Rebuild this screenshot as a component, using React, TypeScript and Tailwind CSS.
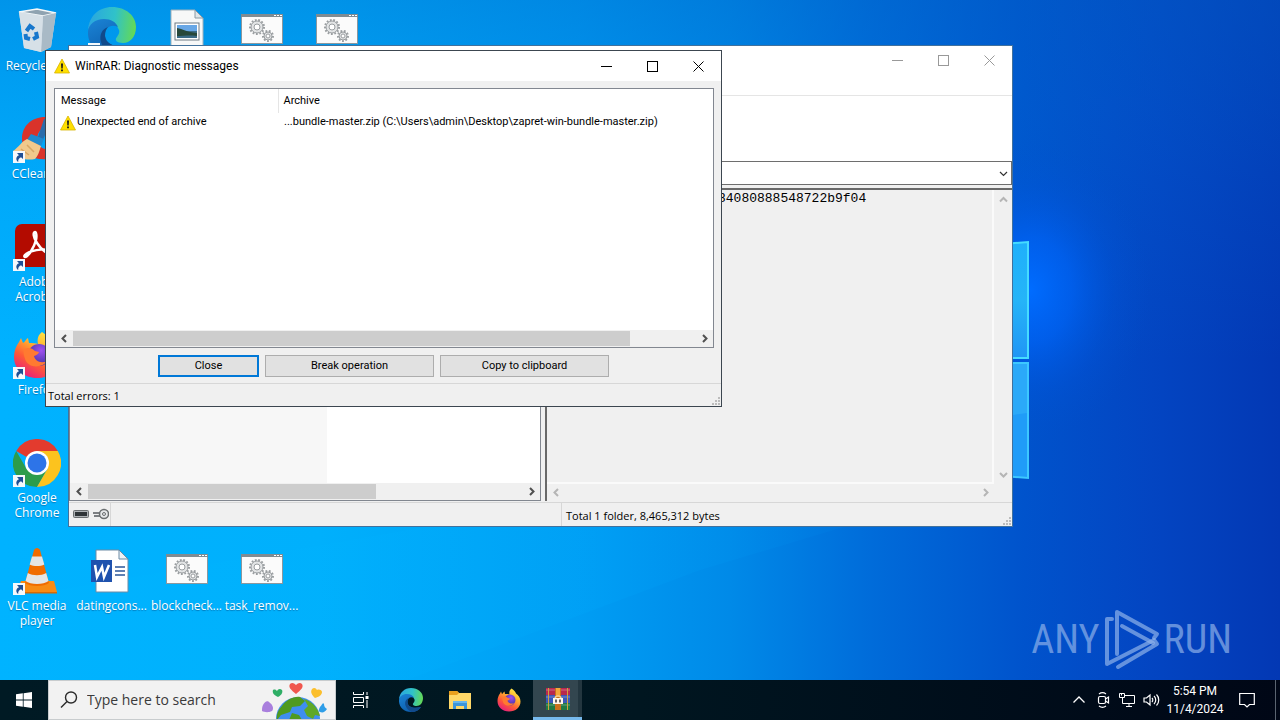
import { useState } from "react";
import type { ReactNode } from "react";
import clsx from "clsx";

type IconProps = { className?: string };

/* ---------- Wallpaper ---------- */

function Wallpaper() {
  return (
    <svg
      className="absolute inset-0 w-full h-full"
      viewBox="0 0 1280 720"
      preserveAspectRatio="none"
      aria-hidden="true"
    >
      <defs>
        <linearGradient id="wp-base" x1="0" y1="0" x2="1" y2="0">
          <stop offset="0" stopColor="#00b2ff" />
          <stop offset="0.25" stopColor="#00b0fc" />
          <stop offset="0.45" stopColor="#009ef4" />
          <stop offset="0.57" stopColor="#008ae8" />
          <stop offset="0.68" stopColor="#006cda" />
          <stop offset="0.8" stopColor="#0053cc" />
          <stop offset="0.9" stopColor="#0345c2" />
          <stop offset="1" stopColor="#0338b4" />
        </linearGradient>
        <linearGradient id="wp-top" x1="0" y1="0" x2="0" y2="1">
          <stop offset="0" stopColor="#0064c8" stopOpacity="0.38" />
          <stop offset="0.25" stopColor="#0070d8" stopOpacity="0.14" />
          <stop offset="0.5" stopColor="#0070d8" stopOpacity="0" />
        </linearGradient>
        <radialGradient id="wp-glow">
          <stop offset="0" stopColor="#006cff" />
          <stop offset="0.35" stopColor="#0062f4" stopOpacity="0.75" />
          <stop offset="0.7" stopColor="#0056e0" stopOpacity="0.25" />
          <stop offset="1" stopColor="#0050d0" stopOpacity="0" />
        </radialGradient>
        <linearGradient id="wp-beam" x1="0" y1="0" x2="1" y2="0">
          <stop offset="0" stopColor="#00b8ff" stopOpacity="0.2" />
          <stop offset="0.6" stopColor="#00b0ff" stopOpacity="0.14" />
          <stop offset="1" stopColor="#00a0ff" stopOpacity="0" />
        </linearGradient>
        <linearGradient id="wp-pane" x1="0" y1="0" x2="0" y2="1">
          <stop offset="0" stopColor="#1fb0fb" />
          <stop offset="0.5" stopColor="#25b4f8" />
          <stop offset="1" stopColor="#2095f5" />
        </linearGradient>
      </defs>
      <rect width="1280" height="720" fill="url(#wp-base)" />
      <rect width="1280" height="720" fill="url(#wp-top)" />
      <path d="M0 720V600L700 480 1000 480 700 570 300 720Z" fill="url(#wp-beam)" />
      <ellipse cx="1030" cy="290" rx="120" ry="150" fill="url(#wp-glow)" />
      <path d="M860 255 L1028 242 V358 H860Z" fill="url(#wp-pane)" stroke="#45dcff" strokeWidth="2" />
      <path d="M860 363 H1028 V478 L860 464Z" fill="#209cf8" stroke="#3cc8ff" strokeWidth="2" />
      <path d="M1013 415 L1027 413 V364 H1013Z" fill="#2ba9f9" />
    </svg>
  );
}

/* ---------- Desktop icons ---------- */

function ShortcutArrow() {
  return (
    <svg className="absolute left-0 bottom-0 w-3 h-3" viewBox="0 0 12 12" aria-hidden="true">
      <rect width="12" height="12" fill="#f5f8fb" />
      <path d="M4 2h6v6L8 6.200C6 7 5 8.500 5.200 11 2.500 9 2.700 5.500 6 4.200Z" fill="#1f4f94" />
    </svg>
  );
}

function RecycleBinIcon({ className }: IconProps) {
  return (
    <svg className={className} viewBox="0 0 48 48" aria-hidden="true">
      <path d="M6 5 L24 2 L43 6 L38 40 L28 45 L11 41Z" fill="#cfdbe4" />
      <path d="M6 5 L24 2 L43 6 L30 9Z" fill="#8fa3b1" />
      <path d="M6 5 L24 2 L43 6 L30 9Z" fill="none" stroke="#f4f8fa" strokeWidth="1.500" />
      <path d="M30 9 L43 6 L38 40 L28 45Z" fill="#a9bac6" />
      <path d="M6 5 L30 9 L28 45 L11 41Z" fill="#d6e0e7" />
      <g fill="none" stroke="#1777cc" strokeWidth="4">
        <path d="M13.500 24l3.500-5 4 3" />
        <path d="M23 25l1 5-4 2" />
        <path d="M17 32l-4-1-.5-4" />
      </g>
    </svg>
  );
}

function EdgeIcon({ className }: IconProps) {
  return (
    <svg className={className} viewBox="0 0 48 48" aria-hidden="true">
      <defs>
        <linearGradient id="edge-a" x1="0" y1="0.3" x2="1" y2="0.4">
          <stop offset="0" stopColor="#2aa5e0" />
          <stop offset="0.55" stopColor="#30c2c9" />
          <stop offset="1" stopColor="#63d957" />
        </linearGradient>
        <linearGradient id="edge-b" x1="0" y1="0" x2="0.6" y2="1">
          <stop offset="0" stopColor="#1b84d6" />
          <stop offset="1" stopColor="#0c5cab" />
        </linearGradient>
      </defs>
      <path
        d="M0 23C1 9 11 0 24 0c14 0 24 9 24 20 0 10-6 16-13 16-6 0-9-3-6-6 1-2 3-4 2-7-2-6-8-9-15-9C8 14 2 18 0 23Z"
        fill="url(#edge-a)"
      />
      <path
        d="M0 24c1-7 7-12 16-12 7 0 12 3 14 8-8-4-14 2-13 9 1 9 12 13 27 9-4 6-11 10-20 10C9 48-1 37 0 24Z"
        fill="url(#edge-b)"
      />
      <path d="M20 20c-6 2-9 8-7 15 2 6 6 10 12 13 8 0 16-4 19-10-14 4-26 0-27-9 0-4 1-7 3-9Z" fill="#114a8b" />
    </svg>
  );
}

function ImageFileIcon({ className }: IconProps) {
  return (
    <svg className={className} viewBox="0 0 48 48" aria-hidden="true">
      <path d="M8 3h24l8 8v34H8Z" fill="#f7f8f8" stroke="#9fb0ba" />
      <path d="M32 3v8h8Z" fill="#dfe5e8" stroke="#8a9aa4" />
      <rect x="12" y="16" width="24" height="17" fill="#fff" stroke="#6e7b84" />
      <rect x="14" y="18" width="20" height="6" fill="#68a7e6" />
      <path d="M14 24h20v7H14Z" fill="#3b6b86" />
      <path d="M14 21c6 1 9 4 20 5v3c-8-1-14 0-20 0Z" fill="#28483a" />
    </svg>
  );
}

function Gear({ cx, cy, r }: { cx: number; cy: number; r: number }) {
  return (
    <g fill="none" stroke="#9a9ea1">
      <circle cx={cx} cy={cy} r={r + 1} strokeWidth="2" strokeDasharray="1.800 1.600" />
      <circle cx={cx} cy={cy} r={r} fill="#e2e4e5" />
      <circle cx={cx} cy={cy} r={r / 2} fill="#fff" />
    </g>
  );
}

function BatchFileIcon({ className }: IconProps) {
  return (
    <svg className={className} viewBox="0 0 48 48" aria-hidden="true">
      <rect x="3.500" y="8.500" width="41" height="28" fill="#fbfbfb" stroke="#8b979e" />
      <rect x="3" y="7" width="42" height="3" fill="#7f8b92" />
      <path d="M36 8.500h2M39 8.500h2M42 8.500h2" stroke="#fff" />
      <Gear cx={19} cy={20} r={6} />
      <Gear cx={30} cy={29} r={4} />
    </svg>
  );
}

function CCleanerIcon({ className }: IconProps) {
  return (
    <svg className={className} viewBox="0 0 48 48" aria-hidden="true">
      <path d="M40 3C22-1 9 9 9 24s10 22 28 20l8-8-12-2c-10 0-13-18 0-22Z" fill="#d9332a" />
      <path d="M31 4l-6 18 5 3 8-20Z" fill="#2a6cab" />
      <path d="M18 19l13 5-3 7-14-6Z" fill="#1e8ad0" />
      <path d="M0 36c6-4 8-9 14-12l14 7c-2 6-3 10-6 13-6 1-14 2-22-8Z" fill="#f1c98c" />
      <path d="M8 34l8 6M14 30l7 7" stroke="#d8a765" strokeWidth="1.500" />
    </svg>
  );
}

function AcrobatIcon({ className }: IconProps) {
  return (
    <svg className={className} viewBox="0 0 48 48" aria-hidden="true">
      <rect x="2" y="1" width="44" height="43" rx="7" fill="#b30b00" />
      <path
        d="M12 34c3 0 9-9 11-17 1-5 0-8-1-8-2 0-2 5 2 11 5 8 12 12 13 9 1-4-17-3-24 2-2 1-2 3-1 3Z"
        fill="none"
        stroke="#fff"
        strokeWidth="2.500"
      />
    </svg>
  );
}

function FirefoxIcon({ className }: IconProps) {
  return (
    <svg className={className} viewBox="0 0 48 48" aria-hidden="true">
      <defs>
        <linearGradient id="fx-a" x1="0.8" y1="0" x2="0.2" y2="1">
          <stop offset="0" stopColor="#fff14a" />
          <stop offset="0.35" stopColor="#ffb02e" />
          <stop offset="0.65" stopColor="#ff5a36" />
          <stop offset="1" stopColor="#e31587" />
        </linearGradient>
        <radialGradient id="fx-b" cx="0.6" cy="0.3">
          <stop offset="0" stopColor="#a050f0" />
          <stop offset="1" stopColor="#5b3bb8" />
        </radialGradient>
      </defs>
      <path
        d="M29 1c5 3 8 7 9 10 5 3 9 9 9 16 0 12-10 20-23 20S1 38 1 26c0-6 2-11 5-15l2-4 2 5c2-1 3-4 5-5l1 5c3 0 7 0 9 1-1-5 0-9 4-12Z"
        fill="url(#fx-a)"
      />
      <circle cx="26" cy="24" r="11" fill="url(#fx-b)" />
      <path d="M11 18c5-2 8-1 11 2l4 1c-1 3-3 3-5 4 1 5 7 8 13 5-4 7-19 8-22-2-1-3-2-7-1-10Z" fill="#ff7a30" />
    </svg>
  );
}

function ChromeIcon({ className }: IconProps) {
  return (
    <svg className={className} viewBox="0 0 48 48" aria-hidden="true">
      <path d="M24 24 3.200 12A24 24 0 0 1 44.800 12Z" fill="#e33b2e" />
      <path d="M24 24 13.600 30 3.200 12A24 24 0 0 0 24 48L34.400 30Z" fill="#2c9c4b" />
      <path d="M24 12H44.800A24 24 0 0 1 24 48L34.400 30Z" fill="#fcc31e" />
      <circle cx="24" cy="24" r="12" fill="#fff" />
      <circle cx="24" cy="24" r="9.500" fill="#2d74e8" />
    </svg>
  );
}

function VlcIcon({ className }: IconProps) {
  return (
    <svg className={className} viewBox="0 0 48 48" aria-hidden="true">
      <path d="M8 34h33l3 11H4Z" fill="#f78b14" />
      <path d="M4 45h40v1.500H4Z" fill="#d66a05" />
      <path d="M24 1c-1.500 0-2.500 1-3 2L12 36c5 4 19 4 24 0L27 3c-.5-1-1.500-2-3-2Z" fill="#f06c00" />
      <path d="M19 9.500h10l2.300 8c-4 2-10.600 2-14.600 0Z" fill="#e4e5e5" />
      <path d="M14.800 26c5 3 13.400 3 18.400 0l2.300 8c-5 4-18 4-23 0Z" fill="#e4e5e5" />
    </svg>
  );
}

function WordFileIcon({ className }: IconProps) {
  return (
    <svg className={className} viewBox="0 0 48 48" aria-hidden="true">
      <path d="M8 3h23l9 9v33H8Z" fill="#fff" stroke="#6d8ba5" />
      <path d="M31 3v9h9Z" fill="#eef2f6" stroke="#6d8ba5" />
      <path d="M27 20h10M27 24h10M27 28h10" stroke="#2b579a" strokeWidth="1.500" />
      <rect x="3" y="13" width="21" height="22" fill="#1f52ae" />
      <path d="M7 18l2 12 5-10 2 10 5-12" fill="none" stroke="#fff" strokeWidth="2.500" />
    </svg>
  );
}

type DesktopItem = {
  name: string;
  label?: string;
  Icon: (props: IconProps) => ReactNode;
  place: string;
  shortcut?: boolean;
};

const desktopItems: DesktopItem[] = [
  { name: "Recycle Bin", label: "Recycle Bin", Icon: RecycleBinIcon, place: "col-start-1 row-start-1" },
  { name: "Microsoft Edge", Icon: EdgeIcon, place: "col-start-2 row-start-1", shortcut: true },
  { name: "Image file", Icon: ImageFileIcon, place: "col-start-3 row-start-1" },
  { name: "Batch file 1", Icon: BatchFileIcon, place: "col-start-4 row-start-1" },
  { name: "Batch file 2", Icon: BatchFileIcon, place: "col-start-5 row-start-1" },
  { name: "CCleaner", label: "CCleaner", Icon: CCleanerIcon, place: "col-start-1 row-start-2", shortcut: true },
  { name: "Adobe Acrobat", label: "Adobe Acrobat", Icon: AcrobatIcon, place: "col-start-1 row-start-3", shortcut: true },
  { name: "Firefox", label: "Firefox", Icon: FirefoxIcon, place: "col-start-1 row-start-4", shortcut: true },
  { name: "Google Chrome", label: "Google Chrome", Icon: ChromeIcon, place: "col-start-1 row-start-5", shortcut: true },
  { name: "VLC media player", label: "VLC media player", Icon: VlcIcon, place: "col-start-1 row-start-6", shortcut: true },
  { name: "datingcons", label: "datingcons...", Icon: WordFileIcon, place: "col-start-2 row-start-6" },
  { name: "blockcheck", label: "blockcheck...", Icon: BatchFileIcon, place: "col-start-3 row-start-6" },
  { name: "task_remov", label: "task_remov...", Icon: BatchFileIcon, place: "col-start-4 row-start-6" },
];

function DesktopIcons() {
  return (
    <div className="relative grid grid-cols-[74px_75px_75px_75px_75px] auto-rows-[108px]">
      {desktopItems.map(({ name, label, Icon, place, shortcut }) => (
        <button
          key={name}
          type="button"
          aria-label={name}
          className={clsx("flex flex-col items-center gap-[3px] pt-[7px] overflow-hidden", place)}
        >
          <span className="relative block size-12 shrink-0">
            <Icon className="size-12" />
            {shortcut && <ShortcutArrow />}
          </span>
          {label && (
            <span className="text-xs leading-[15px] text-white text-center [text-shadow:0_1px_1px_rgba(0,40,90,0.4)]">
              {label}
            </span>
          )}
        </button>
      ))}
    </div>
  );
}

/* ---------- Window parts ---------- */

function CaptionButtons({ className }: { className: string }) {
  return (
    <div className={clsx("flex items-stretch", className)}>
      <button type="button" aria-label="Minimize" className="w-[45px] flex items-center justify-center">
        <svg className="size-[11px]" viewBox="0 0 11 11">
          <path d="M0 5.500h11" stroke="currentColor" />
        </svg>
      </button>
      <button type="button" aria-label="Maximize" className="w-[46px] flex items-center justify-center">
        <svg className="size-[11px]" viewBox="0 0 11 11">
          <rect x="0.500" y="0.500" width="10" height="10" fill="none" stroke="currentColor" />
        </svg>
      </button>
      <button type="button" aria-label="Close window" className="w-[46px] flex items-center justify-center">
        <svg className="size-[11px]" viewBox="0 0 11 11">
          <path d="M0.500 0.500l10 10M10.500 0.500l-10 10" stroke="currentColor" />
        </svg>
      </button>
    </div>
  );
}

const chevrons = {
  left: "M7 2L3.500 5.500 7 9",
  right: "M4 2l3.500 3.500L4 9",
  up: "M2 7.500L5.500 4 9 7.500",
  down: "M2 4l3.500 3.500L9 4",
};

function Chevron({ to, className, thin }: { to: keyof typeof chevrons; className?: string; thin?: boolean }) {
  return (
    <svg className={clsx("size-[11px]", className)} viewBox="0 0 11 11" aria-hidden="true">
      <path d={chevrons[to]} fill="none" stroke="currentColor" strokeWidth={thin ? 1.2 : 2} />
    </svg>
  );
}

function HScrollbar({ thumb, disabled }: { thumb?: string; disabled?: boolean }) {
  return (
    <div className={clsx("flex h-[17px] shrink-0 bg-[#f0f0f0]", disabled ? "text-[#b5b5b5]" : "text-[#505050]")}>
      <button type="button" aria-label="Scroll left" disabled={disabled} className="w-[18px] flex items-center justify-center">
        <Chevron to="left" />
      </button>
      <div className="flex-1 py-px">{thumb && <div className={clsx("h-full bg-[#cdcdcd]", thumb)} />}</div>
      <button type="button" aria-label="Scroll right" disabled={disabled} className="w-[18px] flex items-center justify-center">
        <Chevron to="right" />
      </button>
    </div>
  );
}

function SizeGrip() {
  return (
    <svg className="size-[11px] self-end" viewBox="0 0 11 11" aria-hidden="true">
      <path
        d="M8 2h2v2H8ZM5 5h2v2H5ZM8 5h2v2H8ZM2 8h2v2H2ZM5 8h2v2H5ZM8 8h2v2H8Z"
        fill="#bcbcbc"
      />
    </svg>
  );
}

function WarningIcon({ className }: IconProps) {
  return (
    <svg className={className} viewBox="0 0 16 16" aria-hidden="true">
      <path d="M8 1 15.500 15H.5Z" fill="#ffdf00" stroke="#d8b400" strokeWidth="0.800" strokeLinejoin="round" />
      <path d="M7 5.500h2l-.3 5H7.300ZM7.100 11.500h1.800v1.700H7.100Z" fill="#1c1c1c" />
    </svg>
  );
}

/* ---------- Archive window (behind) ---------- */

function ArchiveWindow() {
  return (
    <section
      aria-label="WinRAR"
      className="absolute left-[68px] top-[45px] w-[945px] h-[482px] flex flex-col bg-[#f0f0f0] border border-[#42719c]"
    >
      <header className="h-7 bg-white flex justify-end">
        <CaptionButtons className="text-[#999999]" />
      </header>
      <div className="h-[22px] bg-white border-b border-[#e5e5e5]" />
      <div className="h-[65px] bg-white" />
      <div className="relative h-6 shrink-0">
        <select
          aria-label="Archive path"
          className="appearance-none w-full h-full bg-white border border-[#6e6e6e] outline-none"
        />
        <Chevron to="down" thin className="absolute right-[3px] top-[7px] text-[#333333] pointer-events-none" />
      </div>
      <div className="flex-1 flex gap-1 pt-[3px] pb-px min-h-0">
        <div className="w-[472px] flex flex-col border border-[#828790]">
          <div className="flex-1 flex bg-white">
            <div className="w-[257px] bg-[#f7f7f7]" />
          </div>
          <HScrollbar thumb="w-[288px]" />
        </div>
        <div className="flex-1 flex flex-col border-l-2 border-t-2 border-[#696969]">
          <div className="flex-1 flex min-h-0">
            <textarea
              readOnly
              aria-label="Archive comment"
              defaultValue="84080888548722b9f04"
              className="flex-1 resize-none overflow-hidden bg-transparent outline-none pl-[171px] pt-px font-['Liberation_Mono',monospace] text-[13px] leading-4 text-black border-r-2 border-b-2 border-[#fafafa]"
            />
            <div className="w-[18px] flex flex-col items-center justify-between py-1 text-[#b5b5b5]">
              <Chevron to="up" />
              <Chevron to="down" />
            </div>
          </div>
          <div className="pr-[18px]">
            <HScrollbar disabled />
          </div>
        </div>
      </div>
      <footer className="h-6 shrink-0 flex border-t border-[#d7d7d7] text-[11px]">
        <div className="w-[42px] flex items-start gap-1 pt-[5px] pl-1 border-r border-[#d7d7d7]">
          <svg className="w-4 h-3 shrink-0" viewBox="0 0 16 12" aria-hidden="true">
            <rect x="0.500" y="2.500" width="15" height="7" rx="1" fill="#aeb2b5" stroke="#6a6e70" />
            <rect x="2" y="4" width="12" height="4" fill="#2f3437" />
          </svg>
          <svg className="w-4 h-3 shrink-0" viewBox="0 0 16 12" aria-hidden="true">
            <path d="M0 5h8M1 8h7" stroke="#555a5d" strokeWidth="1.600" />
            <circle cx="11" cy="6" r="4.500" fill="#e6e8ea" stroke="#6a6e70" strokeWidth="1.500" />
            <circle cx="11" cy="6" r="1.500" fill="none" stroke="#6a6e70" />
          </svg>
        </div>
        <div className="w-[451px] border-r border-[#d7d7d7]" />
        <p className="flex-1 pl-1 leading-[26px] text-black">Total 1 folder, 8,465,312 bytes</p>
        <SizeGrip />
      </footer>
    </section>
  );
}

/* ---------- Diagnostic dialog ---------- */

const messages = [
  {
    text: "Unexpected end of archive",
    archive: "...bundle-master.zip (C:\\Users\\admin\\Desktop\\zapret-win-bundle-master.zip)",
  },
];

function DiagnosticDialog() {
  return (
    <section
      role="dialog"
      aria-labelledby="diag-title"
      className="absolute left-[45px] top-[50px] w-[677px] h-[357px] flex flex-col bg-[#f0f0f0] border border-[#3c4650] text-[11px] text-black"
    >
      <header className="h-[30px] shrink-0 bg-white flex items-center pl-2">
        <WarningIcon className="size-4" />
        <h1 id="diag-title" className="flex-1 pl-[5px] text-xs font-['Roboto','Open_Sans',sans-serif]">
          WinRAR: Diagnostic messages
        </h1>
        <CaptionButtons className="h-full" />
      </header>

      <div className="flex-1 flex flex-col ml-2 mr-[7px] my-[7px] bg-white border border-[#828790] font-['Roboto','Open_Sans',sans-serif]">
        <div className="flex-1">
          <table className="w-full table-fixed text-left">
            <thead>
              <tr className="h-6">
                <th className="w-[223px] pl-[6px] pt-px font-normal border-r border-[#e5e5e5]">Message</th>
                <th className="pl-[5px] pt-px font-normal">Archive</th>
              </tr>
            </thead>
            <tbody>
              {messages.map((m) => (
                <tr key={m.text} className="h-[19px]">
                  <td className="pl-[5px]">
                    <span className="flex items-center gap-px">
                      <WarningIcon className="size-4" />
                      {m.text}
                    </span>
                  </td>
                  <td className="pl-[6px] whitespace-nowrap">{m.archive}</td>
                </tr>
              ))}
            </tbody>
          </table>
        </div>
        <HScrollbar thumb="w-[557px]" />
      </div>

      <div className="flex shrink-0 gap-[6px] pl-28 font-['Roboto','Open_Sans',sans-serif]">
        <button type="button" className="w-[101px] h-[22px] bg-[#e1e1e1] border-2 border-[#0078d7]">
          Close
        </button>
        <button type="button" className="w-[169px] h-[22px] bg-[#e1e1e1] border border-[#adadad]">
          Break operation
        </button>
        <button type="button" className="w-[169px] h-[22px] bg-[#e1e1e1] border border-[#adadad]">
          Copy to clipboard
        </button>
      </div>

      <footer className="h-[23px] shrink-0 mt-[6px] flex border-t border-[#d7d7d7]">
        <p className="flex-1 pl-[2px] leading-6">Total errors: 1</p>
        <SizeGrip />
      </footer>
    </section>
  );
}

/* ---------- Watermark ---------- */

function Watermark() {
  return (
    <div className="absolute right-12 bottom-2 flex items-center gap-1 text-[#8fb2ea]/70 text-[40px] leading-[64px] font-['Roboto_Condensed','Open_Sans_Condensed','Liberation_Sans_Narrow',Roboto,sans-serif]">
      <span>ANY</span>
      <svg className="w-14 h-16" viewBox="0 0 56 64" aria-hidden="true">
        <g fill="none" stroke="currentColor" strokeWidth="4" strokeLinejoin="round" strokeLinecap="round">
          <path d="M8 11H3V56L50 32 53 36 14 59" />
          <path d="M13 46V4L53 26 50 30" />
          <path d="M18 18l31 17" />
        </g>
      </svg>
      <span>RUN</span>
    </div>
  );
}

/* ---------- Taskbar ---------- */

function GlobeDoodle() {
  return (
    <svg className="w-[66px] h-10 shrink-0" viewBox="0 0 66 40" aria-hidden="true">
      <circle cx="37" cy="39" r="22" fill="#3f8ef0" />
      <path d="M21 26c4-6 12-10 18-9l5 4-5 5-8 1-2 5-9 3-4 5c-1-5 1-10 5-14Z" fill="#4f9a20" />
      <path d="M43 19c8 2 14 9 16 17l-5-1-2 4-6-3-3-6 4-4Z" fill="#5fa828" />
      <path d="M31 33l7 2 3 5H28Z" fill="#4f9a20" />
      <path d="M29 4c2-2 4-1 6 1 2-2 4-3 6-1 2 3-1 6-6 10-5-4-8-7-6-10Z" fill="#f0574e" />
      <path d="M12 10c2-1 3 0 4 1 1-2 3-3 5-1 1 2 0 5-4 7-4-2-6-4-5-7Z" fill="#2fae66" />
      <path d="M51 9c2-2 4-1 5 1 2-1 5 0 5 2 0 3-3 5-7 6-3-3-5-6-3-9Z" fill="#fbbf2d" />
      <path d="M2 25c2-4 5-5 7-2 3 2 4 6 2 8-4 2-8 1-10 0 0-2 0-4 1-6Z" fill="#a97fdd" />
      <path d="M59 27c2-2 3-5 4-3 0 2 1 4 3 5-2 3-4 4-7 3-2-1-1-3 0-5Z" fill="#2f9ee8" />
    </svg>
  );
}

function ExplorerIcon({ className }: IconProps) {
  return (
    <svg className={className} viewBox="0 0 24 24" aria-hidden="true">
      <path d="M1 3h8l2 2h12v16H1Z" fill="#ffd868" />
      <path d="M1 3h8l2 2-2 2H1Z" fill="#e9a01e" />
      <path d="M5 13h14v8h-3v-3H8v3H5Z" fill="#3d95d8" />
      <path d="M5 13h14v2H5Z" fill="#67b6ec" />
    </svg>
  );
}

function WinRarIcon({ className }: IconProps) {
  return (
    <svg className={className} viewBox="0 0 24 24" aria-hidden="true">
      <rect y="1" width="24" height="7" fill="#b8284e" />
      <rect y="8" width="24" height="8" fill="#3a58b8" />
      <rect y="16" width="24" height="7" fill="#1f7a44" />
      <path d="M0 3h24M0 10h24M0 18h24" stroke="#fff" strokeOpacity="0.3" />
      <path d="M2.500 1v22M21.500 1v22" stroke="#d0a040" />
      <rect x="9" y="1" width="6" height="22" fill="#c9711b" />
      <rect x="10" y="1" width="4" height="8" fill="#f4a63a" />
      <path d="M9 12c0-4 6-4 6 0" fill="none" stroke="#f6d090" strokeWidth="1.500" />
      <rect x="7" y="11" width="10" height="6" fill="#fff6e8" />
      <path d="M10 12.500v3M14 12.500v3" stroke="#333" strokeWidth="1.500" />
    </svg>
  );
}

const pinned = [
  { name: "Microsoft Edge", icon: <EdgeIcon className="size-6" /> },
  { name: "File Explorer", icon: <ExplorerIcon className="size-6" /> },
  { name: "Firefox", icon: <FirefoxIcon className="size-6" /> },
];

function Taskbar() {
  const [query, setQuery] = useState("");

  return (
    <nav
      aria-label="Taskbar"
      className="relative h-10 shrink-0 flex items-stretch bg-linear-to-r from-[#001a24] via-[#001620] to-[#000716] text-white"
    >
      <button type="button" aria-label="Start" className="w-12 flex items-center justify-center">
        <svg className="size-4" viewBox="0 0 16 16">
          <path d="M0 2.300 6.800 1.300V7.600H0ZM7.600 1.200 16 0V7.600H7.600ZM0 8.400H6.800V14.700L0 13.700ZM7.600 8.400H16V16L7.600 14.800Z" fill="#fff" />
        </svg>
      </button>
      <label className="w-72 flex items-center bg-[#f2f2f2] border border-[#c8ccce] overflow-hidden text-[#2b2b2b]">
        <svg className="size-[18px] ml-[11px] shrink-0" viewBox="0 0 18 18" aria-hidden="true">
          <circle cx="11" cy="6.500" r="5.500" fill="none" stroke="currentColor" strokeWidth="1.400" />
          <path d="M7 10.500L1 16.500" stroke="currentColor" strokeWidth="1.400" />
        </svg>
        <input
          type="text"
          value={query}
          onChange={(e) => setQuery(e.target.value)}
          placeholder="Type here to search"
          className="flex-1 min-w-0 pl-[9px] bg-transparent outline-none text-sm placeholder:text-[#3a3a3a]"
        />
        <GlobeDoodle />
        <span className="w-2 shrink-0" />
      </label>
      <button type="button" aria-label="Task View" className="w-[50px] flex items-center justify-center">
        <svg className="size-4" viewBox="0 0 16 16" fill="none" stroke="#fff">
          <path d="M.5 0v2.500h10V0M.5 16v-2.500h10V16M.5 5.500h10v5H.5ZM14 0v3M14 8v8" />
          <rect x="13" y="4.500" width="2" height="2" fill="#fff" />
        </svg>
      </button>
      {pinned.map((app) => (
        <button key={app.name} type="button" aria-label={app.name} className="w-[49px] flex items-center justify-center">
          {app.icon}
        </button>
      ))}
      <button
        type="button"
        aria-label="WinRAR, 2 windows"
        className="w-[49px] flex items-center justify-center bg-[#33464f] border-b-3 border-[#76b9ed] shadow-[inset_-4px_0_0_#23363f]"
      >
        <WinRarIcon className="size-6" />
      </button>

      <div className="flex-1" />

      <div className="flex items-center">
        <button type="button" aria-label="Show hidden icons" className="w-6 flex justify-center">
          <svg className="size-3" viewBox="0 0 12 12" fill="none" stroke="#fff" strokeWidth="1.300">
            <path d="M.5 8.500L6 3l5.500 5.500" />
          </svg>
        </button>
        <button type="button" aria-label="Meet Now" className="w-6 flex justify-center">
          <svg className="size-4" viewBox="0 0 16 16" fill="none" stroke="#fff" strokeWidth="1.200">
            <rect x="3.500" y="4.500" width="7" height="7" rx="1.500" />
            <path d="M10.500 7l3-2v6l-3-2M4 2c2-1.500 5-1.500 7 0M4 14c2 1.500 5 1.500 7 0" />
          </svg>
        </button>
        <button type="button" aria-label="Network" className="w-6 flex justify-center">
          <svg className="size-4" viewBox="0 0 16 16" fill="none" stroke="#fff">
            <path d="M6 3.500h9.500v8H3.500V6M7 14.500h6M10 11.500v3" />
            <path d="M.5 1.500h5v4h-5ZM2.500 1.500v2" />
          </svg>
        </button>
        <button type="button" aria-label="Volume" className="w-6 flex justify-center">
          <svg className="w-[17px] h-4" viewBox="0 0 17 16" fill="none" stroke="#fff" strokeWidth="1.200">
            <path d="M1 6h2.500L7 3v10L3.500 10H1ZM9 6c1 1 1 3 0 4M11 4c2.300 2 2.300 6 0 8M13.500 2.500c3 3 3 8 0 11" />
          </svg>
        </button>
        <button type="button" className="w-16 text-center text-xs leading-[18px] font-['Roboto','Open_Sans',sans-serif]">
          5:54 PM
          <br />
          11/4/2024
        </button>
        <button type="button" aria-label="Notifications" className="w-10 flex justify-center">
          <svg className="size-4" viewBox="0 0 16 16" fill="none" stroke="#fff" strokeWidth="1.200">
            <path d="M.7 1.500h14.600v11H10.500L8 15l-2.500-2.500H.7Z" />
          </svg>
        </button>
        <button type="button" aria-label="Show desktop" className="w-[5px] h-10 ml-2 border-l border-[#5a6470]" />
      </div>
    </nav>
  );
}

export default function App() {
  return (
    <div className="relative h-screen flex flex-col overflow-hidden font-['Open_Sans','Noto_Sans',sans-serif] select-none">
      <Wallpaper />
      <main className="relative flex-1 min-h-0 overflow-hidden">
        <DesktopIcons />
        <ArchiveWindow />
        <DiagnosticDialog />
        <Watermark />
      </main>
      <Taskbar />
    </div>
  );
}
